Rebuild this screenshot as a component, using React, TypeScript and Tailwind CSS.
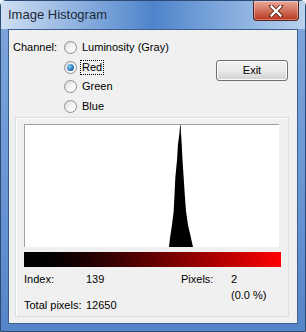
import React from 'react';

const font = { fontFamily: '"Liberation Sans", Arial, sans-serif' };

function Radio({ checked }: { checked?: boolean }) {
  return (
    <span className="relative flex h-[13px] w-[13px] items-center justify-center rounded-full border border-[#8e8f8f] bg-gradient-to-br from-[#d8d8d8] via-[#f4f4f4] to-[#ffffff]">
      {checked && (
        <span className="h-[7px] w-[7px] rounded-full bg-[radial-gradient(circle_at_35%_35%,#8ad3f5,#2a73b8_60%,#0f3f78)]" />
      )}
    </span>
  );
}

function CloseButton() {
  return (
    <div className="flex h-[20px] w-[46px] items-center justify-center rounded-b-[4px] border border-t-0 border-[#5a2418] bg-gradient-to-b from-[#e9a99b] via-[#d0715c] to-[#b8311a] shadow-[inset_0_0_0_1px_rgba(255,255,255,0.35)]">
      <svg width="14" height="12" viewBox="0 0 14 12">
        <path d="M2 1 L12 11 M12 1 L2 11" stroke="#5b1a10" strokeWidth="4" strokeLinecap="square" />
        <path d="M2.5 1.5 L11.5 10.5 M11.5 1.5 L2.5 10.5" stroke="#ffffff" strokeWidth="2.4" strokeLinecap="square" />
      </svg>
    </div>
  );
}

function Histogram() {
  // spike around index ~155, plot is 255 x 122
  const pts = [
    [144, 122], [145, 113], [147, 100], [148.7, 86], [149.5, 70], [150.3, 53],
    [152, 35], [153, 19], [154.5, 8], [155.1, 0], [155.6, 0], [156, 8], [156.7, 19],
    [157.5, 35], [158.7, 53], [159.8, 70], [161, 86], [163, 100], [166, 113], [168, 122],
  ];
  return (
    <svg width="255" height="122" viewBox="0 0 255 122" className="block">
      <polygon points={pts.map((p) => p.join(',')).join(' ')} fill="#000" />
    </svg>
  );
}

export default function App() {
  return (
    <div style={font} className="h-[332px] w-[306px] overflow-hidden bg-white">
      <div className="flex h-[332px] w-[306px] flex-col rounded-t-[6px] border border-[#2b4a74] bg-gradient-to-b from-[#7ea6dc] via-[#6c98d4] to-[#5684c8]">
        {/* title bar */}
        <div className="relative flex h-[28px] items-start bg-gradient-to-r from-[#cfdff2] via-[#4f84cb] to-[#b9d2ee]">
          <span className="pl-[7px] pt-[6px] text-[13px] leading-[16px] text-[#1e2a3a]">Image Histogram</span>
          <div className="absolute right-[6px] top-0">
            <CloseButton />
          </div>
        </div>

        {/* client area */}
        <div className="mx-[7px] mb-[7px] flex flex-1 flex-col border border-[#3b5f8f] bg-[#f0f0f0] text-[11px] text-black">
          <div className="flex h-[87px] pt-[8px]">
            <div className="w-[55px] pl-[4px] pt-[2px] leading-[14px]">Channel:</div>
            <div className="flex flex-col">
              {['Luminosity (Gray)', 'Red', 'Green', 'Blue'].map((label, i) => (
                <div key={label} className="flex h-[19.5px] items-center gap-[3px]">
                  <Radio checked={i === 1} />
                  <span
                    className={
                      i === 1
                        ? 'border border-dotted border-black px-[1px] leading-[13px]'
                        : 'px-[2px] leading-[13px]'
                    }
                  >
                    {label}
                  </span>
                </div>
              ))}
            </div>
            <div className="ml-auto mr-[9px] pt-[22px]">
              <button className="flex h-[21px] w-[72px] items-center justify-center rounded-[3px] border border-[#707070] bg-gradient-to-b from-[#f2f2f2] via-[#ebebeb] to-[#cfcfcf] text-[11px] shadow-[inset_0_0_0_1px_#fcfcfc]">
                Exit
              </button>
            </div>
          </div>

          {/* group panel */}
          <div className="ml-[6px] mr-[8px] h-[200px] border border-[#d5dfe5] shadow-[inset_1px_1px_0_#ffffff]">
            <div className="ml-[8px] mt-[6px] w-[255px] border-l border-t border-[#a0a0a0] bg-white">
              <Histogram />
            </div>
            <div className="ml-[8px] mt-[5px] h-[15px] w-[257px] bg-gradient-to-r from-[#000000] to-[#ff0000]" />
            <div className="ml-[8px] mt-[5px] grid grid-cols-[62px_95px_50px_1fr] leading-[14px]">
              <span>Index:</span>
              <span>139</span>
              <span>Pixels:</span>
              <span>2</span>
              <span />
              <span />
              <span />
              <span className="mt-[2px]">(0.0 %)</span>
              <span className="-mt-[4px]">Total pixels:</span>
              <span className="-mt-[4px]">12650</span>
            </div>
          </div>
        </div>
      </div>
    </div>
  );
}
